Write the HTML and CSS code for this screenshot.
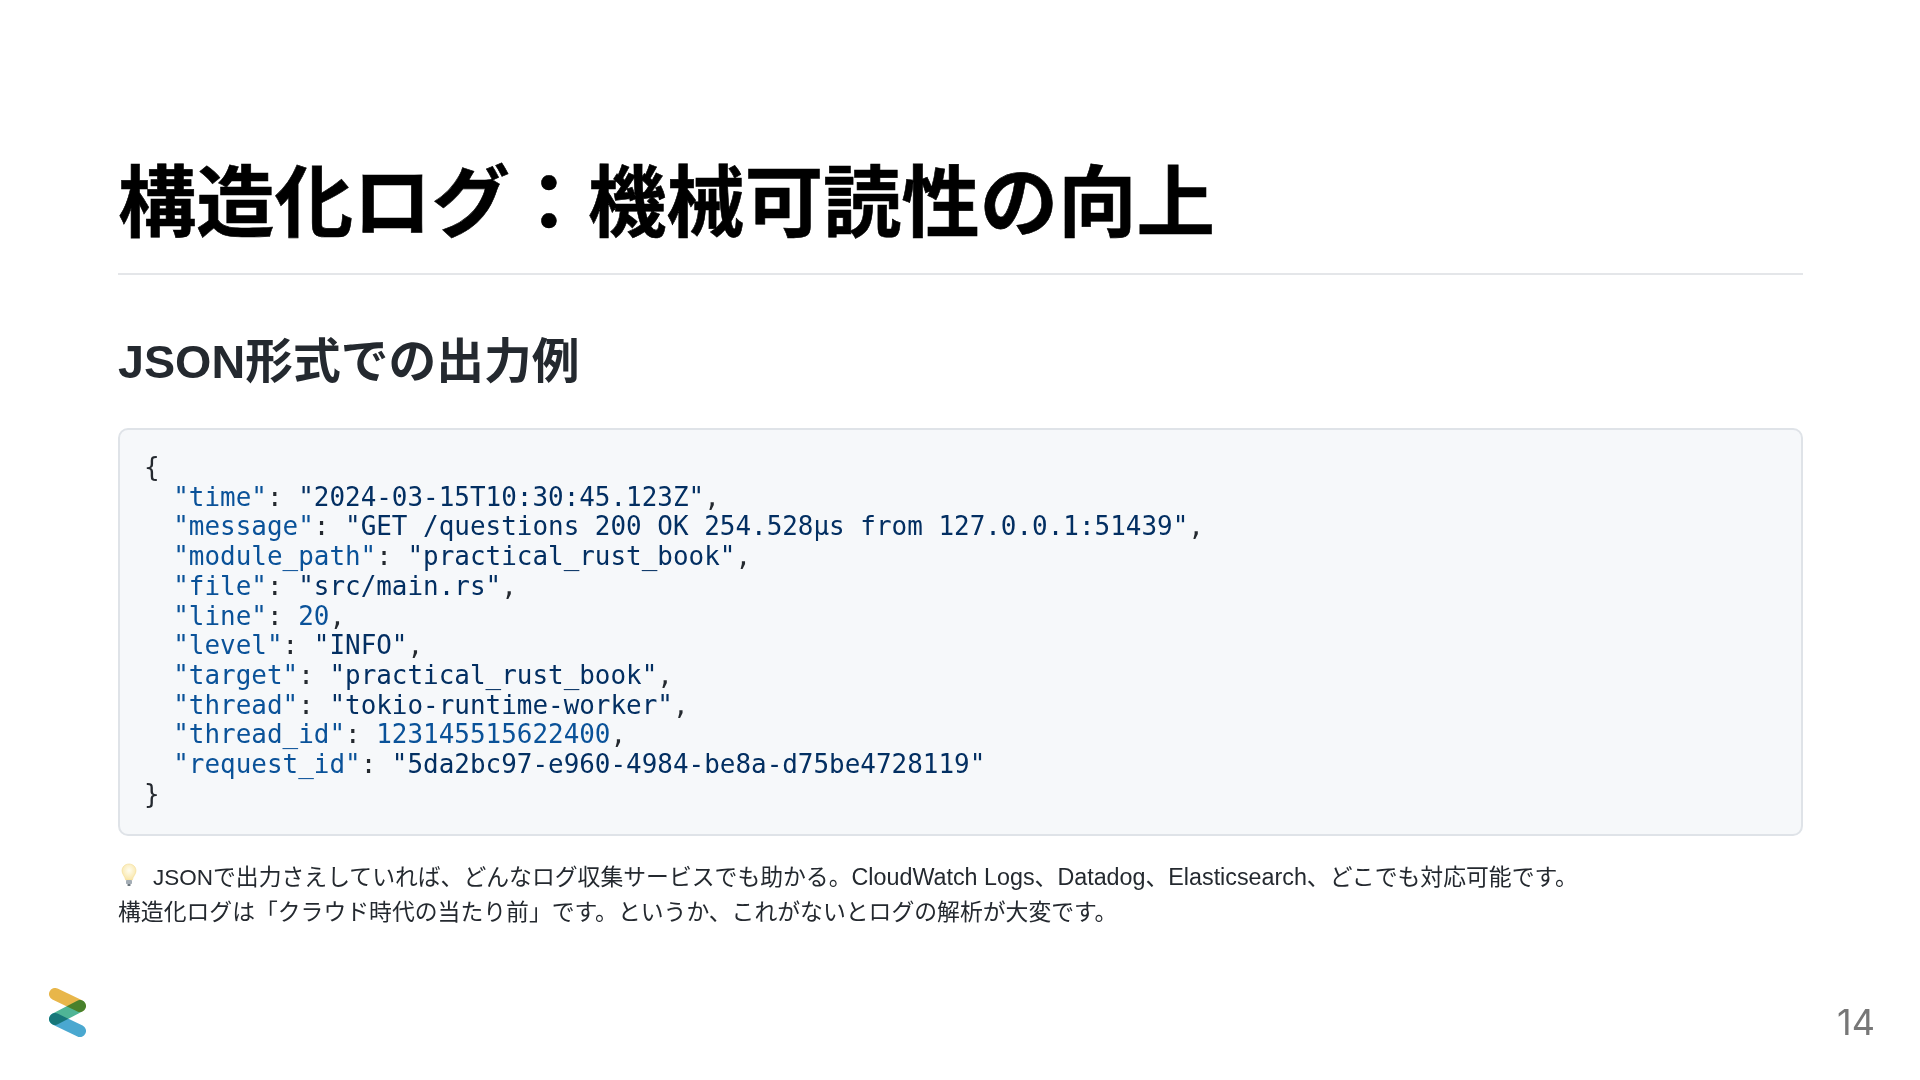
FILE: index.html
```html
<!DOCTYPE html>
<html lang="ja">
<head>
<meta charset="utf-8">
<title>構造化ログ</title>
<link rel="stylesheet" href="styles.css">
</head>
<body>
<main class="slide">
  <h1 class="title">構造化ログ&#xFF1A;機械可読性の向上</h1>
  <h2 class="subtitle"><span class="sub-latin">JSON</span>形式での出力例</h2>
  <pre class="code"><span class="brace">{</span>
  <span class="k">"time"</span>: <span class="s">"2024-03-15T10:30:45.123Z"</span>,
  <span class="k">"message"</span>: <span class="s">"GET /questions 200 OK 254.528µs from 127.0.0.1:51439"</span>,
  <span class="k">"module_path"</span>: <span class="s">"practical_rust_book"</span>,
  <span class="k">"file"</span>: <span class="s">"src/main.rs"</span>,
  <span class="k">"line"</span>: <span class="n">20</span>,
  <span class="k">"level"</span>: <span class="s">"INFO"</span>,
  <span class="k">"target"</span>: <span class="s">"practical_rust_book"</span>,
  <span class="k">"thread"</span>: <span class="s">"tokio-runtime-worker"</span>,
  <span class="k">"thread_id"</span>: <span class="n">123145515622400</span>,
  <span class="k">"request_id"</span>: <span class="s">"5da2bc97-e960-4984-be8a-d75be4728119"</span>
<span class="brace">}</span></pre>
  <p class="note"><svg class="bulb" viewBox="0 0 16 24" aria-hidden="true"><defs><radialGradient id="glow" cx="50%" cy="40%" r="60%"><stop offset="0" stop-color="#fffdf0"/><stop offset="1" stop-color="#f9e6a8"/></radialGradient></defs><path d="M8 1C3.800 1 1 4.200 1 7.800c0 3.200 2.800 5.200 3.700 9.200h6.600C12.200 13 15 11 15 7.800 15 4.200 12.200 1 8 1z" fill="url(#glow)" stroke="#f3dc94" stroke-width=".6"/><rect x="5" y="17" width="6" height="4" rx=".8" fill="#a4adb5"/><rect x="6.300" y="21" width="3.400" height="2" rx="1" fill="#6a747c"/></svg><span class="json">JSON</span>で出力さえしていれば、どんなログ収集サービスでも助かる。<span class="latin">CloudWatch Logs</span>、<span class="latin">Datadog</span>、<span class="latin">Elasticsearch</span>、どこでも対応可能です。<br>構造化ログは「クラウド時代の当たり前」です。というか、これがないとログの解析が大変です。</p>
  <svg class="logo" viewBox="0 0 40 50" aria-hidden="true">
    <path class="bar" d="M7 7 L32 19" stroke="#e8b64a"/>
    <path class="bar" d="M32 19 L7 32" stroke="#4fb596"/>
    <path class="bar" d="M7 32 L32 44" stroke="#4aa8d0"/>
  </svg>
  <div class="page">14</div>
</main>
</body>
</html>
```
FILE: styles.css
```css
html, body { margin: 0; padding: 0; background: #fff; }
.slide {
  position: relative;
  width: 1920px;
  height: 1080px;
  box-sizing: border-box;
  padding: 149px 117px 0 118px;
  overflow: hidden;
  font-family: "Liberation Sans", "Noto Sans CJK JP", sans-serif;
  color: #24292f;
}
.title {
  margin: 0;
  font-size: 78.350px;
  font-weight: 700;
  line-height: 110px;
  height: 124px;
  color: #000;
  -webkit-text-stroke: 0.6px #000;
  border-bottom: 2px solid #e4e6e9;
}
.subtitle {
  margin: 55px 0 0;
  font-size: 47.750px;
  font-weight: 700;
  line-height: 64px;
  color: #24292f;
}
.sub-latin { font-size: 46.700px; }
.code {
  margin: 34px 0 0;
  box-sizing: border-box;
  height: 408px;
  padding: 23px 22px;
  background: #f6f8fa;
  border: 2px solid #dfe3e8;
  border-radius: 10px;
  font-family: "DejaVu Sans Mono", monospace;
  font-size: 25.940px;
  line-height: 29.700px;
  color: #24292f;
}
.brace { margin-left: 2px; }
.k { color: #0a5299; }
.n { color: #0a5299; }
.s { color: #032f62; }
.note {
  margin: 24px 0 0;
  font-size: 22.830px;
  line-height: 34px;
  color: #24292f;
}
.json { font-size: 22.500px; }
.latin { font-size: 23.300px; }
.bulb { width: 16px; height: 24px; margin: 0 16px 0 3px; vertical-align: -2px; }
.logo { position: absolute; left: 48px; top: 987px; width: 40px; height: 50px; }
.bar {
  fill: none;
  stroke-width: 12;
  stroke-linecap: round;
  mix-blend-mode: multiply;
}
.page {
  position: absolute;
  right: 45px;
  top: 1000px;
  font-family: "Inter", "Liberation Sans", sans-serif;
  font-size: 36px;
  line-height: 44px;
  color: #777;
}
```
